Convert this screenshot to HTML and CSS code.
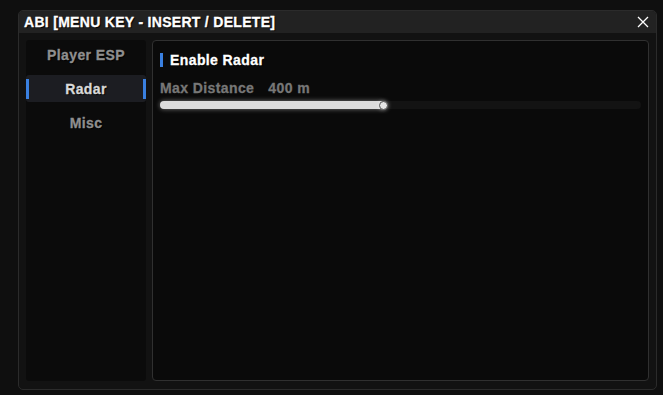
FILE: index.html
```html
<!DOCTYPE html>
<html lang="en">

<head>
    <meta charset="UTF-8">
    <meta name="viewport" content="width=device-width, initial-scale=1.0">
    <title>ABI Menu</title>
    <link rel="stylesheet" href="styles.css">
</head>

<body>
    <div class="window">
        <div class="title-bar">
            <span class="title">ABI [MENU KEY - INSERT / DELETE]</span>
            <svg class="close-icon" viewBox="0 0 12 12" width="12" height="12">
                <path d="M1 1 L11 11 M11 1 L1 11" stroke="white" stroke-width="1.3" fill="none" />
            </svg>
        </div>
        <div class="window-body">
            <div class="sidebar">
                <div class="tab">Player ESP</div>
                <div class="tab active">Radar</div>
                <div class="tab">Misc</div>
            </div>
            <div class="content">
                <div class="section-title">Enable Radar</div>
                <div class="slider-label">
                    <span>Max Distance</span>
                    <span>400 m</span>
                </div>
                <div class="slider">
                    <div class="slider-fill" style="width: 46.5%"></div>
                    <div class="slider-knob" style="left: 46.5%"></div>
                </div>
            </div>
        </div>
    </div>
</body>
</html>
```

FILE: styles.css
```css
* {
    margin: 0;
    padding: 0;
    box-sizing: border-box;
    font-family: "Liberation Sans", Arial, sans-serif;
}

body {
    background-color: #0f0f0f;
    width: 663px;
    height: 395px;
    padding: 10px 6px 5px 18px;
    overflow: hidden;
}

.window {
    height: 380px;
    background-color: #121212;
    border: 1px solid #2b2b2b;
    border-radius: 5px;
    display: flex;
    flex-direction: column;
    overflow: hidden;
}

.title-bar {
    height: 22px;
    background-color: #222222;
    display: flex;
    align-items: center;
    justify-content: space-between;
    padding: 0 7px 0 5px;
}

.title {
    color: white;
    font-size: 14px;
    font-weight: bold;
    letter-spacing: 0.3px;
    -webkit-text-stroke: 0.3px currentColor;
    text-shadow: 1px 1px 1px #000;
}

.close-icon {
    display: block;
}

.window-body {
    flex: 1;
    display: flex;
    gap: 6px;
    padding: 7px 7px 8px 7px;
}

.sidebar {
    width: 120px;
    background-color: #0b0b0b;
    border-radius: 3px;
    display: flex;
    flex-direction: column;
    gap: 7px;
    padding-top: 1px;
}

.tab {
    height: 27px;
    display: flex;
    align-items: center;
    justify-content: center;
    color: #8f8f8f;
    font-size: 14px;
    font-weight: bold;
    letter-spacing: 0.4px;
    -webkit-text-stroke: 0.3px currentColor;
    text-shadow: 1px 1px 1px #000;
    position: relative;
}

.tab.active {
    background-color: #1c1d22;
    color: #d8d8d8;
    border-radius: 3px;
}

.tab.active::before,
.tab.active::after {
    content: "";
    position: absolute;
    top: 4px;
    bottom: 3px;
    width: 3px;
    background-color: #3a80e0;
}

.tab.active::before {
    left: 0;
}

.tab.active::after {
    right: 0;
}

.content {
    flex: 1;
    background-color: #0a0a0a;
    border: 1px solid #303030;
    border-radius: 4px;
    padding: 12px 9px 0 7px;
}

.section-title {
    color: white;
    font-size: 14px;
    font-weight: bold;
    letter-spacing: 0.4px;
    -webkit-text-stroke: 0.3px currentColor;
    text-shadow: 1px 1px 1px #000;
    border-left: 3px solid #3a80e0;
    padding-left: 7px;
    line-height: 14px;
}

.slider-label {
    display: flex;
    gap: 14px;
    color: #777777;
    font-size: 14px;
    font-weight: bold;
    letter-spacing: 0.4px;
    -webkit-text-stroke: 0.3px currentColor;
    margin-top: 13px;
    line-height: 16px;
}

.slider {
    position: relative;
    height: 8px;
    margin-top: 5px;
    margin-right: -2px;
    background-color: #131313;
    border-radius: 4px;
}

.slider-fill {
    height: 100%;
    background-color: #dcdcdc;
    border-radius: 4px;
    box-shadow: 0 0 5px rgba(255, 255, 255, 0.45);
}

.slider-knob {
    position: absolute;
    top: 50%;
    width: 9px;
    height: 9px;
    margin: -4.5px 0 0 -4.5px;
    border-radius: 50%;
    background-color: #e6e6e6;
    border: 1px solid #555;
    box-shadow: 0 0 4px rgba(255, 255, 255, 0.5);
}
```
